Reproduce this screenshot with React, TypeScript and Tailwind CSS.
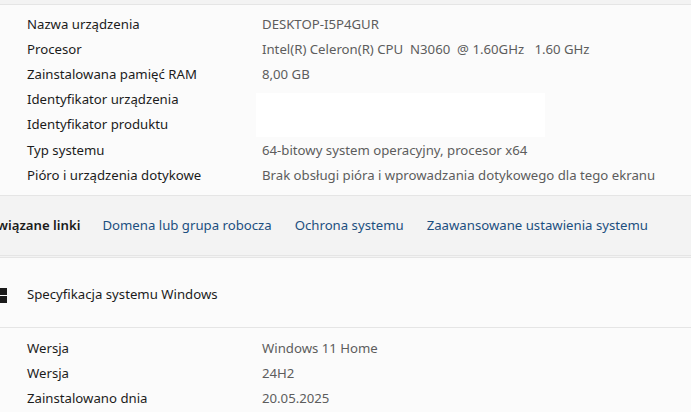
import React from 'react';

const deviceRows = [
  { label: 'Nazwa urządzenia', value: 'DESKTOP-I5P4GUR' },
  { label: 'Procesor', value: 'Intel(R) Celeron(R) CPU  N3060  @ 1.60GHz   1.60 GHz' },
  { label: 'Zainstalowana pamięć RAM', value: '8,00 GB' },
  { label: 'Identyfikator urządzenia', value: '' },
  { label: 'Identyfikator produktu', value: '' },
  { label: 'Typ systemu', value: '64-bitowy system operacyjny, procesor x64' },
  { label: 'Pióro i urządzenia dotykowe', value: 'Brak obsługi pióra i wprowadzania dotykowego dla tego ekranu' },
];

const windowsRows = [
  { label: 'Wersja', value: 'Windows 11 Home' },
  { label: 'Wersja', value: '24H2' },
  { label: 'Zainstalowano dnia', value: '20.05.2025' },
];

const links = ['Domena lub grupa robocza', 'Ochrona systemu', 'Zaawansowane ustawienia systemu'];

const Row: React.FC<{ label: string; value: string }> = ({ label, value }) => (
  <div className="flex h-[25.2px] items-center">
    <div className="w-[262px] shrink-0 pl-[27px] text-[#1b1b1b]">{label}</div>
    <div className="whitespace-pre text-[#5d5d5d]">{value}</div>
  </div>
);

const WindowsLogo = () => (
  <svg width="15" height="15" viewBox="0 0 15 15" className="ml-[-8px] shrink-0">
    <rect x="0" y="0" width="7" height="7" fill="#1b1b1b" />
    <rect x="8" y="0" width="7" height="7" fill="#1b1b1b" />
    <rect x="0" y="8" width="7" height="7" fill="#1b1b1b" />
    <rect x="8" y="8" width="7" height="7" fill="#1b1b1b" />
  </svg>
);

export default function App() {
  return (
    <div
      className="h-[412px] w-[691px] overflow-hidden bg-[#f3f3f3] text-[13.2px]"
      style={{ fontFamily: '"Noto Sans", "Open Sans", sans-serif' }}
    >
      <div className="h-[4px]" />
      {/* Device specs card */}
      <div className="relative border-y border-[#e5e5e5] bg-[#fbfbfb] pt-[7px] pb-[7px]">
        {deviceRows.map((r, i) => (
          <Row key={i} label={r.label} value={r.value} />
        ))}
        <div className="absolute left-[256px] top-[88px] h-[44px] w-[289px] bg-white" />
      </div>

      {/* Related links */}
      <div className="flex h-[60px] items-center border-b border-[#e5e5e5] bg-[#f3f3f3]">
        <div className="ml-[-19px] mr-[22px] shrink-0 font-semibold text-[#1b1b1b]">Powiązane linki</div>
        <div className="flex gap-[23px] text-[#1c4f80]">
          {links.map(l => (
            <span key={l} className="whitespace-nowrap">{l}</span>
          ))}
        </div>
      </div>

      {/* Windows specs card */}
      <div className="mt-[1px] border-t border-[#e5e5e5] bg-[#fbfbfb]">
        <div className="flex h-[70px] items-center border-b border-[#e5e5e5] pt-[5px]">
          <WindowsLogo />
          <span className="ml-[20px] text-[#1b1b1b]">Specyfikacja systemu Windows</span>
        </div>
        <div className="pt-[8px]">
          {windowsRows.map((r, i) => (
            <Row key={i} label={r.label} value={r.value} />
          ))}
        </div>
      </div>
    </div>
  );
}
